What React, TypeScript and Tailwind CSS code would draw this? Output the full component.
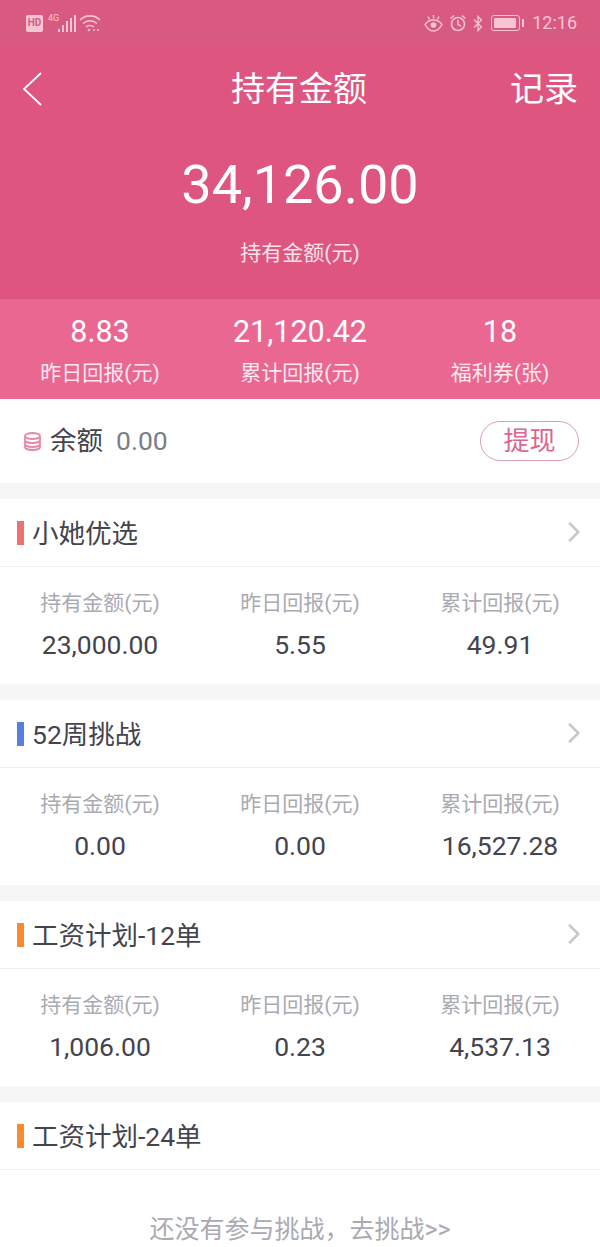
import { ChevronRight } from 'lucide-react'

const cjkFont = "font-['Roboto','Noto_Sans_CJK_SC',sans-serif]"

type Stat = { label: string; value: string }

// Three-column figures under each plan title
const plans: { title: string; bar: string; stats: Stat[] }[] = [
  {
    title: '小她优选',
    bar: 'bg-[#ee7070]',
    stats: [
      { label: '持有金额(元)', value: '23,000.00' },
      { label: '昨日回报(元)', value: '5.55' },
      { label: '累计回报(元)', value: '49.91' },
    ],
  },
  {
    title: '52周挑战',
    bar: 'bg-[#5480dc]',
    stats: [
      { label: '持有金额(元)', value: '0.00' },
      { label: '昨日回报(元)', value: '0.00' },
      { label: '累计回报(元)', value: '16,527.28' },
    ],
  },
  {
    title: '工资计划-12单',
    bar: 'bg-[#fb8a2e]',
    stats: [
      { label: '持有金额(元)', value: '1,006.00' },
      { label: '昨日回报(元)', value: '0.23' },
      { label: '累计回报(元)', value: '4,537.13' },
    ],
  },
]

function StatusBar() {
  return (
    <div className="flex h-[46px] items-center justify-between bg-[#d95a80] pl-[26px] pr-[23px] text-[#f7c4d3]">
      <div className="flex items-center">
        <div className="flex h-[17px] w-[17px] items-center justify-center rounded-[2px] bg-[#f7c4d3] text-[10px] font-bold leading-none text-[#d95a80]">
          HD
        </div>
        <svg width="30" height="20" viewBox="0 0 30 20" className="ml-[5px]" fill="currentColor">
          <text x="0" y="8" fontSize="9" fontFamily="Roboto">4G</text>
          <rect x="10" y="16" width="2" height="3" />
          <rect x="14" y="12" width="2" height="7" />
          <rect x="18" y="8" width="2" height="11" />
          <rect x="22" y="5" width="2" height="14" />
          <rect x="26" y="2" width="2" height="17" />
        </svg>
        <svg width="22" height="18" viewBox="0 0 22 18" className="ml-[1px]" fill="none" stroke="currentColor" strokeWidth="1.6">
          <path d="M1 6c5.5-5.5 14.5-5.5 20 0" />
          <path d="M4 9.5c3.8-3.7 10.2-3.7 14 0" />
          <path d="M7 13c2.2-2 5.8-2 8 0" />
          <circle cx="10" cy="16" r="1.3" fill="currentColor" stroke="none" />
          <circle cx="15" cy="16" r="1" fill="currentColor" stroke="none" />
          <circle cx="19" cy="16" r="1" fill="currentColor" stroke="none" />
        </svg>
      </div>
      <div className="flex items-center">
        <svg width="19" height="17" viewBox="0 0 19 17" fill="none" stroke="currentColor" strokeWidth="1.4">
          <path d="M1 9.500C3.500 6 6.500 5 9.500 5s6 1 8.500 4.500C15.500 14 12.500 16 9.500 16S3.500 14 1 9.500Z" />
          <circle cx="9.500" cy="10" r="2.800" fill="currentColor" stroke="none" />
          <path d="M4 1.500 5.500 4.500M9.500 0v3.500M15 1.500l-1.500 3" />
        </svg>
        <svg width="18" height="18" viewBox="0 0 18 18" className="ml-[6px]" fill="none" stroke="currentColor" strokeWidth="1.500">
          <circle cx="9" cy="10" r="6.500" />
          <path d="M9 6v4.500l3 1.500M1.500 4.500 5 1.500M16.500 4.500 13 1.500" />
        </svg>
        <svg width="10" height="17" viewBox="0 0 10 17" className="ml-[6px]" fill="none" stroke="currentColor" strokeWidth="1.300">
          <path d="M1 4.500 8.500 12 5 15.500v-14L8.500 5 1 12.500" />
        </svg>
        <div className="ml-[8px] flex h-[16px] w-[29px] items-center rounded-[3px] border border-[#f7c4d3] p-[2px]">
          <div className="h-full w-[22px] rounded-[1px] bg-[#f7c4d3]" />
        </div>
        <div className="ml-[2px] h-[8px] w-[2px] bg-[#f7c4d3]" />
        <span className="ml-[8px] font-['Roboto',sans-serif] text-[18px] leading-none">12:16</span>
      </div>
    </div>
  )
}

function PlanHeader({ title, bar, chevron }: { title: string; bar: string; chevron: boolean }) {
  return (
    <div className="flex h-[68px] items-center border-b border-[#efefef] pl-[17px] pr-[9px]">
      <div className={`h-6 w-[7px] ${bar}`} />
      <span className="ml-[8px] mt-[3px] text-[26.5px] leading-none text-[#43444e]">{title}</span>
      {chevron && <ChevronRight className="ml-auto -mt-[2px] text-[#c8c8cc]" size={34} strokeWidth={1.8} />}
    </div>
  )
}

export default function App() {
  return (
    <div className={`flex h-[1247px] w-[600px] flex-col overflow-hidden bg-white ${cjkFont}`}>
      <StatusBar />

      {/* Header with total */}
      <div className="flex h-[253px] flex-col bg-[#de5680] text-white">
        <div className="grid h-[86px] grid-cols-[1fr_auto_1fr] items-center pl-[20px] pr-[22px]">
          <svg width="24" height="36" viewBox="0 0 24 36" fill="none" stroke="currentColor" strokeWidth="1.800">
            <path d="M21 2 4 18l17 16" />
          </svg>
          <span className="text-[34px] leading-none">持有金额</span>
          <span className="justify-self-end text-[34px] leading-none">记录</span>
        </div>
        <div className="mt-[21px] text-center font-['Roboto',sans-serif] text-[54px] leading-[64px]">34,126.00</div>
        <div className="mt-[24px] text-center text-[21px] leading-[24px] text-[#fbe3ea]">持有金额(元)</div>
      </div>

      {/* Yesterday / total / coupons */}
      <div className="grid h-[100px] grid-cols-3 bg-[#ea6791] pt-[15px] text-center text-white">
        {[
          { value: '8.83', label: '昨日回报(元)' },
          { value: '21,120.42', label: '累计回报(元)' },
          { value: '18', label: '福利券(张)' },
        ].map((s) => (
          <div key={s.label}>
            <div className="text-[30.5px] leading-[36px]">{s.value}</div>
            <div className="mt-[11px] text-[21px] leading-[24px] text-[#fde8ee]">{s.label}</div>
          </div>
        ))}
      </div>

      {/* Balance */}
      <div className="flex h-[84px] items-center pl-[24px] pr-[21px]">
        <svg width="17" height="19" viewBox="0 0 17 19" fill="none" stroke="#e888a4" strokeWidth="1.800">
          <ellipse cx="8.500" cy="4" rx="7.500" ry="3" />
          <path d="M1 4v11c0 1.700 3.400 3 7.500 3s7.500-1.300 7.500-3V4M1 8c0 1.700 3.400 3 7.500 3S16 9.700 16 8M1 12c0 1.700 3.400 3 7.500 3s7.500-1.300 7.500-3" />
        </svg>
        <span className="ml-[9px] text-[26.5px] leading-none text-[#43444e]">余额</span>
        <span className="ml-[13px] text-[26.5px] leading-none text-[#7b7d88]">0.00</span>
        <button className="ml-auto flex h-[40px] w-[99px] items-center justify-center rounded-full border border-[#d9a0b5] text-[26px] leading-none text-[#dc6490]">
          提现
        </button>
      </div>

      {plans.map((plan) => (
        <div key={plan.title}>
          <div className="h-[16px] bg-[#f6f6f6]" />
          <PlanHeader title={plan.title} bar={plan.bar} chevron />
          <div className="grid h-[117px] grid-cols-3 pt-[23px] text-center">
            {plan.stats.map((s) => (
              <div key={s.label}>
                <div className="text-[21px] leading-[26px] text-[#a9aab2]">{s.label}</div>
                <div className="mt-[13px] text-[26.5px] leading-[32px] text-[#43444e]">{s.value}</div>
              </div>
            ))}
          </div>
        </div>
      ))}

      <div className="h-[16px] bg-[#f6f6f6]" />
      <PlanHeader title="工资计划-24单" bar="bg-[#fb8a2e]" chevron={false} />
      <div className="mt-[45px] text-center text-[25px] leading-[30px] text-[#a9aab2]">还没有参与挑战，去挑战&gt;&gt;</div>
    </div>
  )
}
